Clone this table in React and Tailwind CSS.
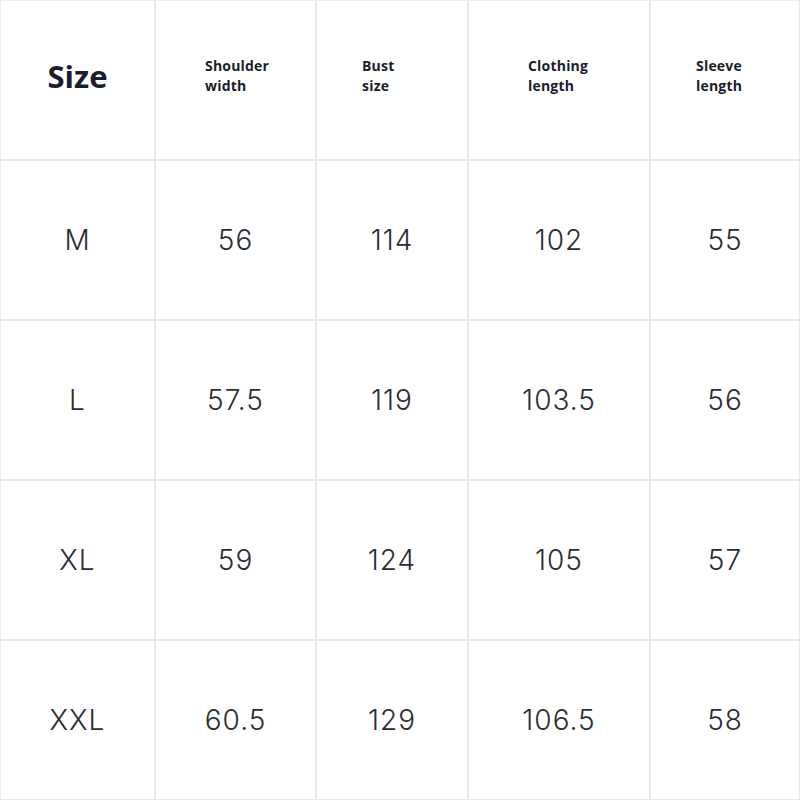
const headers = [
  { label: ['Shoulder', 'width'], pad: 'pl-[49px]' },
  { label: ['Bust', 'size'], pad: 'pl-[45px]' },
  { label: ['Clothing', 'length'], pad: 'pl-[59px]' },
  { label: ['Sleeve', 'length'], pad: 'pl-[45px]' },
];

const rows = [
  ['M', '56', '114', '102', '55'],
  ['L', '57.5', '119', '103.5', '56'],
  ['XL', '59', '124', '105', '57'],
  ['XXL', '60.5', '129', '106.5', '58'],
];

const cell = 'h-[160px] border-r-2 border-b-2 border-[#e6e8ea]';

export default function App() {
  return (
    <div className="w-[800px] h-[800px] bg-white overflow-hidden">
      <div className="grid grid-cols-[155px_161px_152px_182px_150px] border-t border-l border-[#eceef0]">
        <div className={`${cell} flex items-center justify-center`}>
          <span className="text-[31px] font-bold text-[#1b1d2c] pb-[8px]" style={{ fontFamily: '"Open Sans", "Noto Sans", sans-serif' }}>
            Size
          </span>
        </div>
        {headers.map((h, i) => (
          <div key={i} className={`${cell} flex items-center ${h.pad} pb-[8px]`}>
            <div className="text-[14px] font-bold leading-[20px] tracking-[0.2px] text-[#1b1d2c]" style={{ fontFamily: '"Open Sans", "Noto Sans", sans-serif' }}>
              {h.label[0]}
              <br />
              {h.label[1]}
            </div>
          </div>
        ))}
        {rows.map((r, ri) =>
          r.map((v, ci) => (
            <div key={`${ri}-${ci}`} className={`${cell} flex items-center justify-center`}>
              <span className="text-[28px] font-light tracking-[1px] text-[#2b2d33]" style={{ fontFamily: 'Inter, "Noto Sans", sans-serif' }}>
                {v}
              </span>
            </div>
          ))
        )}
      </div>
    </div>
  );
}
